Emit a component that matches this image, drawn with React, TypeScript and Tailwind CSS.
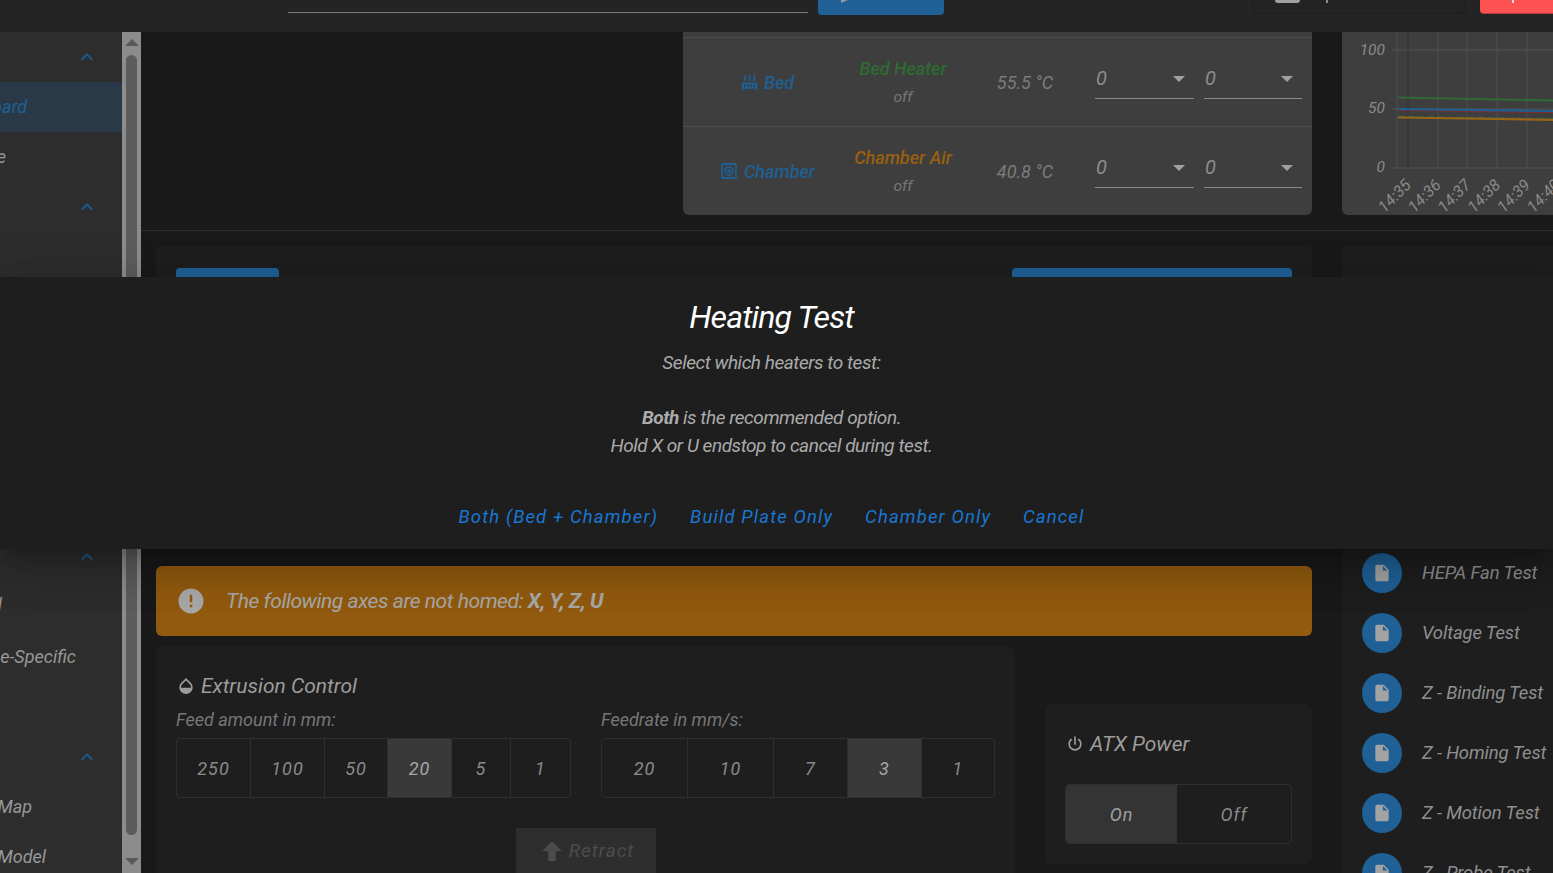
import React from "react";

const P = {
  chevron: "M7.41,15.41L12,10.83L16.59,15.41L18,14L12,8L6,14L7.41,15.41Z",
  alert: "M13,13H11V7H13M13,17H11V15H13M12,2A10,10 0 0,0 2,12A10,10 0 0,0 12,22A10,10 0 0,0 22,12A10,10 0 0,0 12,2Z",
  file: "M13,9V3.5L18.5,9M6,2C4.89,2 4,2.89 4,4V20A2,2 0 0,0 6,22H18A2,2 0 0,0 20,20V8L14,2H6Z",
  power: "M16.56,5.44L15.11,6.89C16.84,7.94 18,9.83 18,12A6,6 0 0,1 12,18A6,6 0 0,1 6,12C6,9.83 7.16,7.94 8.88,6.88L7.44,5.44C5.36,6.88 4,9.28 4,12A8,8 0 0,0 12,20A8,8 0 0,0 20,12C20,9.28 18.64,6.88 16.56,5.44M13,3H11V13H13",
  arrow: "M15,20H9V12H4.16L12,4.16L19.84,12H15V20Z",
  drop: "M17.66,8L12,2.35L6.34,8C4.78,9.56 4,11.64 4,13.64C4,15.64 4.78,17.75 6.34,19.31C7.9,20.87 9.95,21.66 12,21.66C14.05,21.66 16.1,20.87 17.66,19.31C19.22,17.75 20,15.64 20,13.64C20,11.64 19.22,9.56 17.66,8M6,14C6,12 6.62,10.73 7.76,9.6L12,5.27L16.24,9.65C17.38,10.77 18,12 18,14H6Z",
  radiator: "M7.95,3L6.53,5.19L7.95,7.4H7.94L5.95,10.5L4.22,9.6L5.64,7.39L4.22,5.19L6.22,2.09L7.95,3M13.95,2.89L12.53,5.1L13.95,7.3L13.94,7.31L11.95,10.4L10.22,9.5L11.64,7.3L10.22,5.1L12.22,2L13.95,2.89M20,2.89L18.56,5.1L20,7.3V7.31L18,10.4L16.25,9.5L17.67,7.3L16.25,5.1L18.25,2L20,2.89M2,22V14A2,2 0 0,1 4,12H20A2,2 0 0,1 22,14V22H20V20H4V22H2M6,14A1,1 0 0,0 5,15V17A1,1 0 0,0 6,18A1,1 0 0,0 7,17V15A1,1 0 0,0 6,14M10,14A1,1 0 0,0 9,15V17A1,1 0 0,0 10,18A1,1 0 0,0 11,17V15A1,1 0 0,0 10,14M14,14A1,1 0 0,0 13,15V17A1,1 0 0,0 14,18A1,1 0 0,0 15,17V15A1,1 0 0,0 14,14M18,14A1,1 0 0,0 17,15V17A1,1 0 0,0 18,18A1,1 0 0,0 19,17V15A1,1 0 0,0 18,14Z",
};

function Icon({ d, className }: { d: string; className: string }) {
  return (
    <svg viewBox="0 0 24 24" fill="currentColor" className={className}>
      <path d={d} />
    </svg>
  );
}

function ChamberIcon() {
  return (
    <svg viewBox="0 0 16 16" className="w-[16px] h-[16px] text-[#1f5f93]" fill="none" stroke="currentColor">
      <rect x="1" y="1" width="14" height="14" rx="1" strokeWidth="1.8" />
      <circle cx="8" cy="8" r="4" strokeWidth="1.6" />
      <circle cx="8" cy="8" r="1.4" fill="currentColor" strokeWidth="0" />
      <path d="M8 4v8M4 8h8M5.2 5.2l5.6 5.6M10.8 5.2l-5.6 5.6" strokeWidth="0.7" />
    </svg>
  );
}

function SideRow({ label, end, active, chevron, lift }: { label?: string; end?: string; active?: boolean; chevron?: boolean; lift?: boolean }) {
  return (
    <div className={`h-[50px] shrink-0 flex items-center relative ${active ? "bg-[#2a3947] text-[#1f6096]" : "text-[#989898]"}`}>
      {label && (
        <div className={`w-0 flex justify-end whitespace-nowrap text-[18px] leading-none ${end} ${lift ? "pb-[4px]" : ""}`}>
          {label}
        </div>
      )}
      {chevron && (
        <div className="ml-auto mr-[23px] text-[#1c5b8f]">
          <Icon d={P.chevron} className="w-[24px] h-[24px]" />
        </div>
      )}
    </div>
  );
}

function Select() {
  return (
    <div className="h-[34px] border-b border-[#8a8a8a] flex items-center justify-between pb-[8px] pl-[1px] pr-[9px] text-[#8c8c8c] text-[20px]">
      <span>0</span>
      <span className="mt-[2px] w-0 h-0 border-x-[6px] border-x-transparent border-t-[6px] border-t-[#a0a0a0]" />
    </div>
  );
}

function HeaterRow({ icon, name, heater, heaterColor, temp, divider, iconGap }: { icon: React.ReactNode; name: string; heater: string; heaterColor: string; temp: string; divider?: boolean; iconGap: string }) {
  return (
    <div className={`flex items-center ${divider ? "h-[89px] border-b border-[#4d4d4d]" : "h-[88px]"}`}>
      <div className={`w-[168px] flex items-center justify-center text-[#1f5f93] text-[18px] font-medium ${iconGap}`}>
        {icon}
        <span>{name}</span>
      </div>
      <div className="w-[104px] flex flex-col items-center">
        <span className={`text-[18px] font-medium leading-[26px] mt-[2px] ${heaterColor}`}>{heater}</span>
        <span className="text-[#777777] text-[15.5px] leading-[28px] mt-[1px]">off</span>
      </div>
      <div className="w-[140px] text-center text-[#7b7b7b] text-[18px]">{temp}</div>
      <div className="w-[99px]"><Select /></div>
      <div className="w-[98px] ml-[10px]"><Select /></div>
    </div>
  );
}

function Chart() {
  const xs = [1397, 1438, 1467, 1497, 1527];
  const labels = ["14:35", "14:36", "14:37", "14:38", "14:39", "14:40"];
  return (
    <svg viewBox="1342 32 211 183" className="w-[211px] h-[183px] block italic">
      {[50, 109, 168].map((y) => (
        <line key={y} x1="1392" x2="1553" y1={y} y2={y} stroke="#525252" strokeWidth="1" />
      ))}
      {xs.map((x) => (
        <line key={x} x1={x} x2={x} y1="32" y2="168" stroke="#4f4f4f" strokeWidth="1" />
      ))}
      <line x1="1408" x2="1408" y1="32" y2="168" stroke="#333333" strokeWidth="1" />
      <line x1="1398" x2="1553" y1="97.5" y2="100.5" stroke="#2f6b34" strokeWidth="2.2" />
      <line x1="1398" x2="1553" y1="110.5" y2="112.8" stroke="#7a2f2f" strokeWidth="1.2" />
      <line x1="1398" x2="1553" y1="109" y2="111" stroke="#1f5f93" strokeWidth="2.2" />
      <line x1="1398" x2="1553" y1="116.5" y2="118.8" stroke="#1d6f66" strokeWidth="1.2" strokeDasharray="6 4" />
      <line x1="1398" x2="1553" y1="117.5" y2="119.8" stroke="#9a6413" strokeWidth="2.2" />
      {[["100", 55], ["50", 113], ["0", 172]].map(([t, y]) => (
        <text key={String(t)} x="1385" y={Number(y)} textAnchor="end" fontSize="15.5" fill="#8a8a8a" fontFamily="Roboto">{t}</text>
      ))}
      {labels.map((t, i) => (
        <text key={t} x={1412 + i * 29.8} y={186} textAnchor="end" fontSize="16" fill="#8a8a8a" fontFamily="Roboto" transform={`rotate(-45 ${1412 + i * 29.8} 186)`}>{t}</text>
      ))}
    </svg>
  );
}

function Group({ items, active, widths }: { items: string[]; active: number; widths: string[] }) {
  return (
    <div className="h-[60px] flex border border-[#2f2f2f] rounded-[4px] overflow-hidden">
      {items.map((t, i) => (
        <div key={i} className={`${widths[i]} flex items-center justify-center text-[18px] tracking-[1px] ${i ? "border-l border-[#2f2f2f]" : ""} ${i === active ? "bg-[#393939] text-[#a6a6a6]" : "text-[#8a8a8a]"}`}>
          {t}
        </div>
      ))}
    </div>
  );
}

function MacroItem({ label }: { label: string }) {
  return (
    <div className="h-[60px] shrink-0 flex items-center pl-[20px]">
      <div className="w-[40px] h-[40px] rounded-full bg-[#1f6096] flex items-center justify-center text-[#a3a3a3]">
        <Icon d={P.file} className="w-[20px] h-[20px]" />
      </div>
      <span className="ml-[20px] mt-[2px] text-[18.5px] tracking-[-0.15px] text-[#8f8f8f] whitespace-nowrap">{label}</span>
    </div>
  );
}

export default function App() {
  return (
    <div className="relative w-[1553px] h-[873px] overflow-hidden flex flex-col bg-[#191919] italic [font-family:Roboto,sans-serif]">
      <header className="h-[32px] shrink-0 bg-[#242424] flex items-start">
        <div className="ml-[288px] w-[520px] h-[13px] border-b border-[#7a7a7a]" />
        <div className="ml-[10px] w-[126px] h-[15px] rounded-b-[4px] bg-[#1f6096] pl-[23px]">
          <div className="w-[7px] h-[3px] bg-[#9a9a9a] [clip-path:polygon(0_100%,0_0,100%_0)]" />
        </div>
        <div className="ml-[308px] w-[214px] h-[14px] rounded-b-[6px] border-b border-x border-[#1e1e1e] bg-[#232323] pl-[22px] flex items-start">
          <div className="w-[25px] h-[3px] bg-[#a0a0a0] rounded-b-[3px]" />
          <div className="ml-[26px] w-[2px] h-[3px] bg-[#8a8a8a]" />
        </div>
        <div className="ml-[14px] flex-1 h-[14px] rounded-bl-[4px] bg-[#ff5252] border-b border-[#b83b3b] pl-[32px]">
          <div className="w-[2px] h-[3px] bg-[#ffd9d9]" />
        </div>
      </header>

      <div className="flex-1 flex min-h-0">
        <aside className="w-[122px] shrink-0 bg-[#2d2d2d] flex flex-col overflow-hidden">
          <SideRow chevron />
          <SideRow label="Dashboard" end="ml-[27px]" active />
          <SideRow label="Console" end="ml-[6px]" />
          <SideRow chevron />
          <SideRow />
          <SideRow />
          <SideRow />
          <SideRow />
          <SideRow />
          <SideRow />
          <SideRow chevron />
          <SideRow label="General" end="ml-[2px]" lift />
          <SideRow label="Machine-Specific" end="ml-[76px]" />
          <SideRow />
          <SideRow chevron />
          <SideRow label="Height Map" end="ml-[32px]" />
          <SideRow label="Object Model" end="ml-[46px]" />
        </aside>

        <div className="w-[19px] shrink-0 bg-[#8c8c8c] flex flex-col items-center">
          <div className="mt-[7px] w-0 h-0 border-x-[7px] border-x-transparent border-b-[7px] border-b-[#5a5a5a]" />
          <div className="mt-[9px] w-[11px] h-[780px] rounded-full bg-[#5c5c5c]" />
          <div className="mt-[23px] w-0 h-0 border-x-[7px] border-x-transparent border-t-[7px] border-t-[#5a5a5a]" />
        </div>

        <main className="flex-1 min-w-0 overflow-hidden flex flex-col">
          <div className="flex gap-[30px] pl-[15px] shrink-0">
            <div className="w-[1156px] shrink-0 flex justify-end">
              <div className="w-[629px] bg-[#3e3e3e] rounded-b-[6px]">
                <div className="h-[6px] border-b border-[#4d4d4d]" />
                <HeaterRow divider iconGap="gap-[5px]" icon={<Icon d={P.radiator} className="w-[19px] h-[19px]" />} name="Bed" heater="Bed Heater" heaterColor="text-[#2e6b32]" temp="55.5 °C" />
                <HeaterRow iconGap="gap-[7px] pl-[2px]" icon={<ChamberIcon />} name="Chamber" heater="Chamber Air" heaterColor="text-[#99600f]" temp="40.8 °C" />
              </div>
            </div>
            <div className="w-[260px] shrink-0 bg-[#3e3e3e] rounded-bl-[6px]">
              <Chart />
            </div>
          </div>

          <div className="mt-[15px] h-px shrink-0 bg-[#2e2e2e]" />

          <div className="mt-[15px] flex gap-[30px] pl-[15px] flex-1 min-h-0">
            <div className="w-[1156px] shrink-0 flex flex-col">
              <div className="h-[300px] shrink-0 bg-[#1e1e1e] rounded-[6px] px-[20px] pt-[22px] flex justify-between items-start">
                <div className="w-[103px] h-[36px] bg-[#1f6096] rounded-[4px]" />
                <div className="w-[280px] h-[36px] bg-[#1f6096] rounded-[4px]" />
              </div>
              <div className="mt-[20px] h-[70px] shrink-0 rounded-[6px] bg-[#915a0e] flex items-center pl-[20px] text-[#a8a8a8]">
                <Icon d={P.alert} className="w-[30px] h-[30px]" />
                <span className="ml-[20px] mt-[2px] text-[21px] tracking-[-0.44px]">The following axes are not homed: <b>X, Y, Z, U</b></span>
              </div>
              <div className="mt-[10px] flex gap-[30px] flex-1 min-h-0">
                <div className="w-[859px] shrink-0 bg-[#1e1e1e] rounded-t-[6px] px-[20px] pt-[28px]">
                  <div className="flex items-center gap-[5px] text-[21px] text-[#9c9c9c] leading-[24px]">
                    <Icon d={P.drop} className="w-[20px] h-[20px]" />
                    <span>Extrusion Control</span>
                  </div>
                  <div className="mt-[10px] flex justify-between">
                    <div className="w-[395px]">
                      <div className="text-[18px] leading-[24px] text-[#777777] mb-[6px]">Feed amount in mm:</div>
                      <Group items={["250", "100", "50", "20", "5", "1"]} active={3} widths={["w-[73px]", "w-[74px]", "w-[63px]", "w-[64px]", "w-[59px]", "w-[60px]"]} />
                    </div>
                    <div className="w-[394px]">
                      <div className="text-[18px] leading-[24px] text-[#777777] mb-[6px]">Feedrate in mm/s:</div>
                      <Group items={["20", "10", "7", "3", "1"]} active={3} widths={["w-[85px]", "w-[86px]", "w-[74px]", "w-[74px]", "w-[73px]"]} />
                    </div>
                  </div>
                  <div className="mt-[30px] flex justify-center">
                    <div className="w-[140px] h-[60px] bg-[#2e2e2e] flex items-start justify-center pt-[8px] gap-[2px] text-[#4c4c4c] text-[19px] tracking-[1px]">
                      <Icon d={P.arrow} className="w-[30px] h-[30px]" />
                      <span className="leading-[30px]">Retract</span>
                    </div>
                  </div>
                </div>
                <div className="w-[267px] shrink-0 mt-[58px] h-[160px] bg-[#1e1e1e] rounded-[6px] px-[20px] pt-[28px]">
                  <div className="flex items-center gap-[5px] text-[21px] text-[#9c9c9c] leading-[24px]">
                    <Icon d={P.power} className="w-[20px] h-[20px]" />
                    <span>ATX Power</span>
                  </div>
                  <div className="mt-[28px] h-[60px] flex border border-[#2f2f2f] rounded-[4px] overflow-hidden text-[18px] tracking-[1px]">
                    <div className="w-[111px] bg-[#343434] text-[#a0a0a0] flex items-center justify-center">On</div>
                    <div className="flex-1 text-[#8a8a8a] flex items-center justify-center">Off</div>
                  </div>
                </div>
              </div>
            </div>

            <div className="w-[260px] shrink-0 bg-[#1e1e1e] rounded-t-[6px] pt-[297px] flex flex-col">
              {["HEPA Fan Test", "Voltage Test", "Z - Binding Test", "Z - Homing Test", "Z - Motion Test", "Z - Probe Test"].map((m) => (
                <MacroItem key={m} label={m} />
              ))}
            </div>
          </div>
        </main>
      </div>

      <div className="absolute inset-x-0 top-[277px] h-[272px] bg-[#1e1e1e] pr-[10px] flex flex-col items-center shadow-[0_11px_15px_-7px_rgba(0,0,0,0.2),0_24px_38px_3px_rgba(0,0,0,0.14),0_9px_46px_8px_rgba(0,0,0,0.12)]">
        <h2 className="mt-[20px] text-[32px] leading-[40px] tracking-[-0.85px] text-white">Heating Test</h2>
        <div className="mt-[12px] text-[19px] leading-[28px] tracking-[-0.45px] text-[#ababab] text-center">
          <p>Select which heaters to test:</p>
          <p className="mt-[27px]"><b>Both</b> is the recommended option.</p>
          <p>Hold X or U endstop to cancel during test.</p>
        </div>
        <div className="mt-[43px] flex gap-[32px] text-[18.5px] tracking-[1.13px] text-[#1976d2] leading-[28px]">
          <span>Both (Bed + Chamber)</span>
          <span>Build Plate Only</span>
          <span>Chamber Only</span>
          <span>Cancel</span>
        </div>
      </div>
    </div>
  );
}
